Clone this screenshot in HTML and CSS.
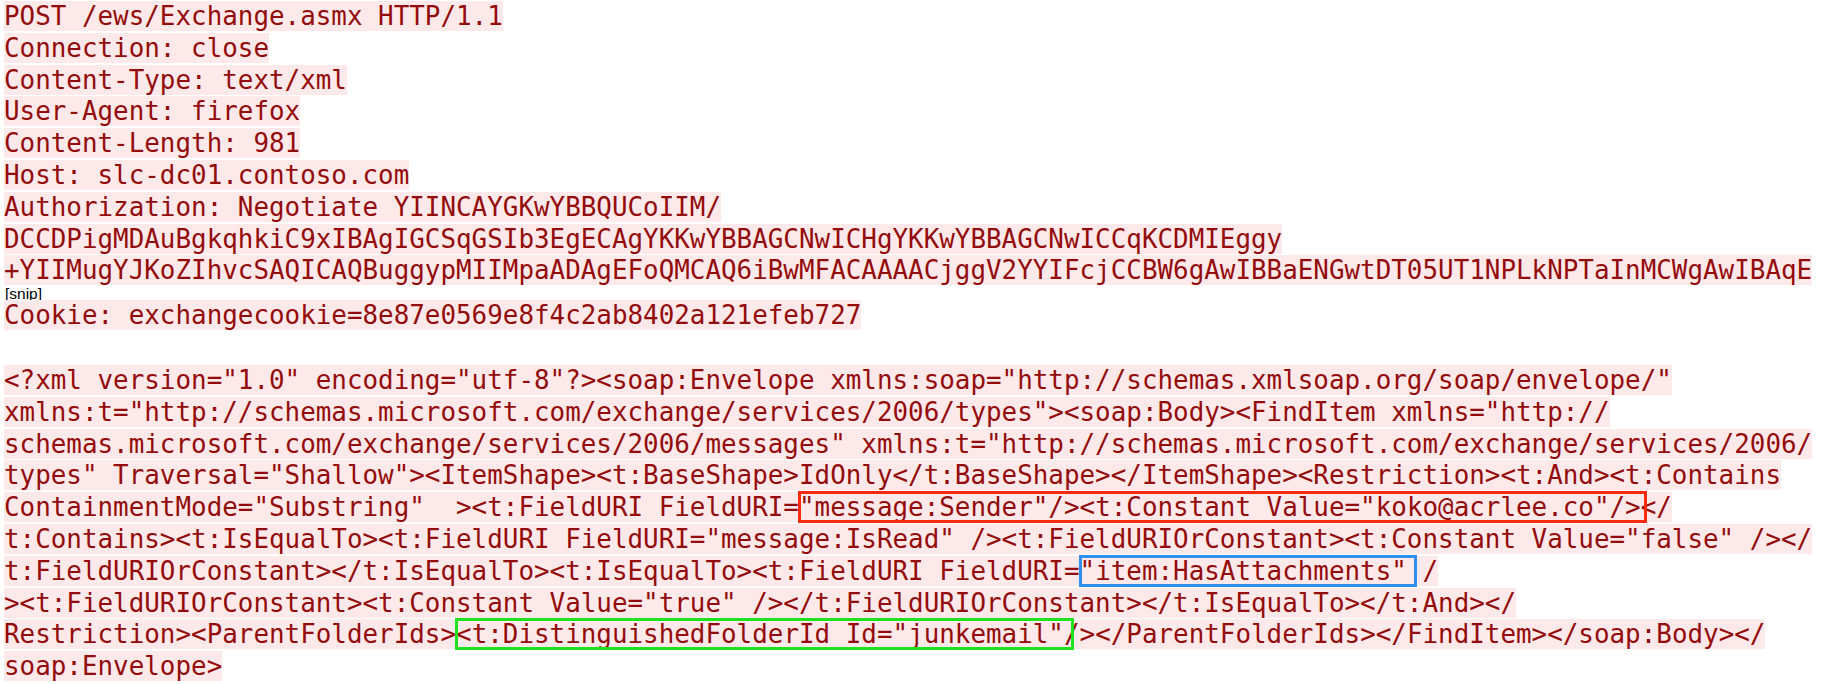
FILE: index.html
```html
<!DOCTYPE html>
<html>
<head>
<meta charset="utf-8">
<link rel="stylesheet" href="styles.css">
</head>
<body>
<div class="doc">
  <div class="ln"><span class="hl">POST /ews/Exchange.asmx HTTP/1.1</span></div>
  <div class="ln"><span class="hl">Connection: close</span></div>
  <div class="ln"><span class="hl">Content-Type: text/xml</span></div>
  <div class="ln"><span class="hl">User-Agent: firefox</span></div>
  <div class="ln"><span class="hl">Content-Length: 981</span></div>
  <div class="ln"><span class="hl">Host: slc-dc01.contoso.com</span></div>
  <div class="ln"><span class="hl">Authorization: Negotiate YIINCAYGKwYBBQUCoIIM/</span></div>
  <div class="ln"><span class="hl">DCCDPigMDAuBgkqhkiC9xIBAgIGCSqGSIb3EgECAgYKKwYBBAGCNwICHgYKKwYBBAGCNwICCqKCDMIEggy</span></div>
  <div class="ln"><span class="hl">+YIIMugYJKoZIhvcSAQICAQBuggypMIIMpaADAgEFoQMCAQ6iBwMFACAAAACjggV2YYIFcjCCBW6gAwIBBaENGwtDT05UT1NPLkNPTaInMCWgAwIBAqE</span></div>
  <div class="snip">[snip]</div>
  <div class="ln"><span class="hl">Cookie: exchangecookie=8e87e0569e8f4c2ab8402a121efeb727</span></div>
  <div class="gap"></div>
  <div class="ln"><span class="hl">&lt;?xml version="1.0" encoding="utf-8"?&gt;&lt;soap:Envelope xmlns:soap="http://schemas.xmlsoap.org/soap/envelope/"</span></div>
  <div class="ln"><span class="hl">xmlns:t="http://schemas.microsoft.com/exchange/services/2006/types"&gt;&lt;soap:Body&gt;&lt;FindItem xmlns="http://</span></div>
  <div class="ln"><span class="hl">schemas.microsoft.com/exchange/services/2006/messages" xmlns:t="http://schemas.microsoft.com/exchange/services/2006/</span></div>
  <div class="ln"><span class="hl">types" Traversal="Shallow"&gt;&lt;ItemShape&gt;&lt;t:BaseShape&gt;IdOnly&lt;/t:BaseShape&gt;&lt;/ItemShape&gt;&lt;Restriction&gt;&lt;t:And&gt;&lt;t:Contains</span></div>
  <div class="ln"><span class="hl">ContainmentMode="Substring"  &gt;&lt;t:FieldURI FieldURI=<span class="box box-red">"message:Sender"/&gt;&lt;t:Constant Value="koko@acrlee.co"/&gt;</span>&lt;/</span></div>
  <div class="ln"><span class="hl">t:Contains&gt;&lt;t:IsEqualTo&gt;&lt;t:FieldURI FieldURI="message:IsRead" /&gt;&lt;t:FieldURIOrConstant&gt;&lt;t:Constant Value="false" /&gt;&lt;/</span></div>
  <div class="ln"><span class="hl">t:FieldURIOrConstant&gt;&lt;/t:IsEqualTo&gt;&lt;t:IsEqualTo&gt;&lt;t:FieldURI FieldURI=<span class="box box-blue">"item:HasAttachments"</span> /</span></div>
  <div class="ln"><span class="hl">&gt;&lt;t:FieldURIOrConstant&gt;&lt;t:Constant Value="true" /&gt;&lt;/t:FieldURIOrConstant&gt;&lt;/t:IsEqualTo&gt;&lt;/t:And&gt;&lt;/</span></div>
  <div class="ln"><span class="hl">Restriction&gt;&lt;ParentFolderIds&gt;<span class="box box-green">&lt;t:DistinguishedFolderId Id="junkemail"</span>/&gt;&lt;/ParentFolderIds&gt;&lt;/FindItem&gt;&lt;/soap:Body&gt;&lt;/</span></div>
  <div class="ln"><span class="hl">soap:Envelope&gt;</span></div>
</div>
</body>
</html>
```
FILE: styles.css
```css
html, body {
  margin: 0;
  padding: 0;
  background: #ffffff;
}

.doc {
  padding: 1px 0 0 4px;
  font-family: "DejaVu Sans Mono", monospace;
  font-size: 25.9px;
  color: #940b0b;
}

.ln {
  line-height: 31.8px;
  height: 31.8px;
  white-space: pre;
}

.hl {
  background: #fde9e9;
}

.snip {
  font-family: "Liberation Sans", Arial, sans-serif;
  font-size: 15.5px;
  line-height: 13px;
  color: #000000;
  padding-left: 1px;
}

.gap {
  height: 33px;
}

.box {
  outline-width: 3px;
  outline-style: solid;
  outline-offset: -2px;
  padding-right: 5px;
  margin-right: -5px;
}

.box-red {
  outline-color: #fb2a0c;
}

.box-blue {
  outline-color: #2e8ff0;
  padding-right: 9px;
  margin-right: -9px;
}

.box-green {
  outline-color: #1fe21f;
  padding-right: 9px;
  margin-right: -9px;
}
```
